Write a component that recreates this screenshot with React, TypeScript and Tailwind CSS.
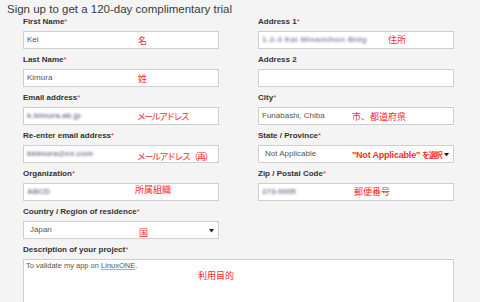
import React from 'react'

const latin = "font-['Liberation_Sans',Arial,sans-serif]"
const jp = "font-['Liberation_Sans','Noto_Sans_CJK_JP',sans-serif]"

function Note({ children, className }: { children: React.ReactNode; className: string }) {
  return (
    <span className={`absolute whitespace-nowrap text-[9px] leading-[10px] text-[#ff2a2a] ${jp} ${className}`}>
      {children}
    </span>
  )
}

function Blur({ text, className = '' }: { text: string; className?: string }) {
  return (
    <span className={`blur-[0.9px] text-[8px] leading-[16px] font-bold text-[#7c8296] ${className}`}>{text}</span>
  )
}

function Field({
  label,
  required = true,
  select = false,
  children,
}: {
  label: string
  required?: boolean
  select?: boolean
  children?: React.ReactNode
}) {
  return (
    <div className="flex flex-col">
      <div className="h-[10px] mb-[4px] text-[8px] leading-[10px] font-bold text-[#333]">
        {label}
        {required && <span className="text-[#e03030] font-normal">*</span>}
      </div>
      <div
        className={`relative h-[18px] bg-white border border-[#cfcfcf] flex items-center text-[8px] text-[#555] ${
          select ? 'pl-[6px]' : 'pl-[3px]'
        }`}
      >
        {children}
        {select && (
          <svg className="absolute right-[4px] top-[7px]" width="5" height="4" viewBox="0 0 5 4">
            <path d="M0 0 L5 0 L2.5 3.5 Z" fill="#222" />
          </svg>
        )}
      </div>
    </div>
  )
}

export default function App() {
  return (
    <div className={`w-[480px] h-[302px] overflow-hidden bg-[#f4f4f4] pt-[2px] ${latin}`}>
      <h1 className="pl-[7px] h-[14px] text-[11.5px] leading-[14px] text-[#3a3a3a]">
        Sign up to get a 120-day complimentary trial
      </h1>

      <div className="ml-[23px] mt-[1px] w-[431px] grid grid-cols-[196px_196px] gap-x-[39px] gap-y-[6px]">
        <Field label="First Name">
          Kei
          <Note className="left-[114px] top-[4px]">名</Note>
        </Field>
        <Field label="Address 1">
          <Blur text="1-2-3 Kai Minamihon Bldg" className="text-[#8a90ac] tracking-[0.3px]" />
          <Note className="left-[129px] top-[3px]">住所</Note>
        </Field>

        <Field label="Last Name" required>
          Kimura
          <Note className="left-[114px] top-[4px]">姓</Note>
        </Field>
        <Field label="Address 2" required={false} />

        <Field label="Email address">
          <Blur text="k.kimura.ab.jp" />
          <Note className="left-[113px] top-[4px] tracking-[-1.7px]">メールアドレス</Note>
        </Field>
        <Field label="City">
          Funabashi, Chiba
          <Note className="left-[93px] top-[4px]">市、都道府県</Note>
        </Field>

        <Field label="Re-enter email address">
          <Blur text="kkimura@ex.com" />
          <Note className="left-[113px] top-[6px] tracking-[-1.5px]">メールアドレス（再）</Note>
        </Field>
        <Field label="State / Province" select>
          Not Applicable
          <Note className="left-[93px] top-[4px] font-bold text-[7.5px] tracking-[-0.2px]">
            "Not Applicable" <span className="text-[7.5px] tracking-[-1px]">を選択</span>
          </Note>
        </Field>

        <Field label="Organization">
          <Blur text="ABCD" />
          <Note className="left-[111px] top-[1px]">所属組織</Note>
        </Field>
        <Field label="Zip / Postal Code">
          <Blur text="273-0005" className="text-[#6f7894]" />
          <Note className="left-[95px] top-[3px]">郵便番号</Note>
        </Field>

        <Field label="Country / Region of residence" select>
          Japan
          <Note className="left-[115px] top-[6px]">国</Note>
        </Field>
        <div />

        <div className="col-span-2 flex flex-col">
          <div className="h-[10px] mb-[4px] text-[8px] leading-[10px] font-bold text-[#333]">
            Description of your project<span className="text-[#e03030] font-normal">*</span>
          </div>
          <div className="relative h-[60px] bg-white border border-[#cfcfcf] pl-[2px] pt-[1px] text-[7.5px] leading-[10px] text-[#555]">
            To validate my app on{' '}
            <span className="underline decoration-[#f09090] decoration-1 underline-offset-1">LinuxONE</span>.
            <Note className="left-[174px] top-[11px]">利用目的</Note>
          </div>
        </div>
      </div>
    </div>
  )
}
